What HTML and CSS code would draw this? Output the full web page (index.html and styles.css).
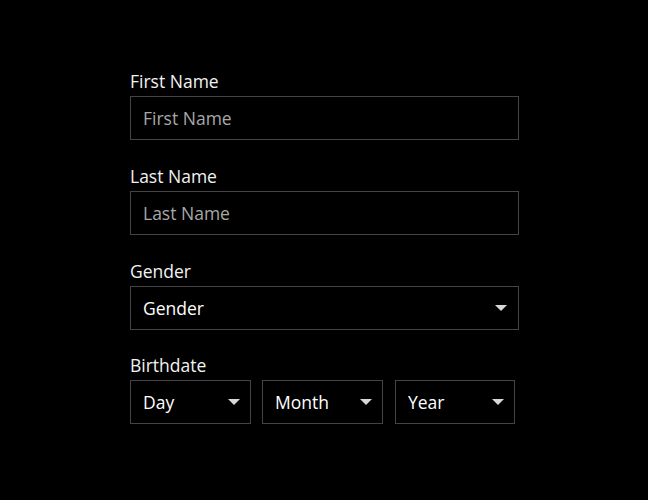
FILE: index.html
```html
<!DOCTYPE html>
<html lang="en">
<head>
<meta charset="utf-8">
<title>Form</title>
<link rel="stylesheet" href="styles.css">
</head>
<body>
<form class="form">
  <div class="group">
    <label class="label" for="fn">First Name</label>
    <input class="field" id="fn" type="text" placeholder="First Name">
  </div>
  <div class="group">
    <label class="label" for="ln">Last Name</label>
    <input class="field" id="ln" type="text" placeholder="Last Name">
  </div>
  <div class="group">
    <label class="label" for="gd">Gender</label>
    <div class="select full">
      <select id="gd"><option>Gender</option></select>
      <svg class="caret" width="12" height="6" viewBox="0 0 12 6"><path d="M0 0H12L6 6Z" fill="#d8d8d8"/></svg>
    </div>
  </div>
  <div class="group last">
    <label class="label">Birthdate</label>
    <div class="row">
      <div class="select day">
        <select><option>Day</option></select>
        <svg class="caret" width="12" height="6" viewBox="0 0 12 6"><path d="M0 0H12L6 6Z" fill="#d8d8d8"/></svg>
      </div>
      <div class="select month">
        <select><option>Month</option></select>
        <svg class="caret" width="12" height="6" viewBox="0 0 12 6"><path d="M0 0H12L6 6Z" fill="#d8d8d8"/></svg>
      </div>
      <div class="select year">
        <select><option>Year</option></select>
        <svg class="caret" width="12" height="6" viewBox="0 0 12 6"><path d="M0 0H12L6 6Z" fill="#d8d8d8"/></svg>
      </div>
    </div>
  </div>
</form>
</body>
</html>
```

FILE: styles.css
```css
html, body {
  margin: 0;
  background: #000;
  height: 100%;
}
body {
  font-family: "Open Sans", "Noto Sans", sans-serif;
  font-size: 17.5px;
  color: #f2f2f2;
}
.form {
  padding: 70px 0 0 130px;
  display: flex;
  flex-direction: column;
}
.group {
  display: flex;
  flex-direction: column;
  margin-bottom: 25px;
}
.group.last {
  margin-top: -1px;
}
.label {
  display: block;
  line-height: 22px;
  height: 22px;
  margin-bottom: 4px;
  color: #f2f2f2;
}
.field {
  box-sizing: border-box;
  width: 389px;
  height: 44px;
  border: 1px solid #444;
  background: #000;
  color: #fff;
  font-family: inherit;
  font-size: 17.5px;
  padding: 0 12px;
  outline: none;
  margin: 0;
}
.field::placeholder {
  color: #a8a8a8;
  opacity: 1;
}
.select {
  box-sizing: border-box;
  height: 44px;
  border: 1px solid #444;
  background: #000;
  display: flex;
  align-items: center;
  padding: 0 10px 0 0;
}
.select.full { width: 389px; padding-right: 11px; }
.select.day { width: 121px; }
.select.month { width: 121px; }
.select.year { width: 120px; }
.select select {
  appearance: none;
  -webkit-appearance: none;
  flex: 1;
  min-width: 0;
  border: none;
  background: transparent;
  color: #fff;
  font-family: inherit;
  font-size: 17.5px;
  padding: 0 0 0 12px;
  margin: 0;
  height: 100%;
  outline: none;
}
.caret {
  flex: none;
  display: block;
}
.row {
  display: flex;
}
.row .day { margin-right: 11px; }
.row .month { margin-right: 12px; }
```
